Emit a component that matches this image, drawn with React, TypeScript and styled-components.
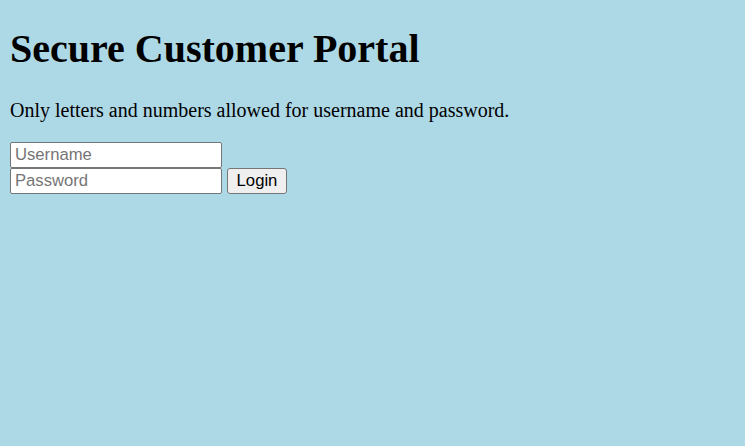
import React from "react";
import styled, { createGlobalStyle } from "styled-components";

const Global = createGlobalStyle`
  html, body {
    background: #add8e6;
  }
  body {
    margin: 0;
    padding: 10px 10px 0;
    font-family: "Liberation Serif", "Times New Roman", serif;
    color: #000;
  }
`;

const Title = styled.h1`
  font-size: 40px;
  font-weight: bold;
  margin: 15px 0 27px;
`;

const Note = styled.p`
  font-size: 20px;
  margin: 20px 0;
`;

const Form = styled.form`
  display: grid;
  grid-template-columns: 212px auto;
  grid-template-rows: 26px 26px;
  column-gap: 5px;
  justify-content: start;
  margin: 0;
`;

const Field = styled.input<{ $row: number }>`
  grid-column: 1;
  grid-row: ${(p) => p.$row};
  box-sizing: border-box;
  width: 212px;
  height: 26px;
  margin: 0;
  padding: 1px 4px;
  border: 1px solid #767676;
  border-radius: 2px;
  background: #fff;
  font-family: "Liberation Sans", Arial, sans-serif;
  font-size: 16.67px;
  color: #000;
  outline: none;
  &::placeholder {
    color: #757575;
  }
`;

const Button = styled.button`
  grid-column: 2;
  grid-row: 2;
  box-sizing: border-box;
  width: 60px;
  height: 26px;
  margin: 0;
  padding: 0 8px;
  border: 1px solid #767676;
  border-radius: 3px;
  background: #efefef;
  font-family: "Liberation Sans", Arial, sans-serif;
  font-size: 16.67px;
  color: #000;
`;

export default function App() {
  return (
    <>
      <Global />
      <Title>Secure Customer Portal</Title>
      <Note>Only letters and numbers allowed for username and password.</Note>
      <Form onSubmit={(e) => e.preventDefault()}>
        <Field $row={1} type="text" placeholder="Username" />
        <Field $row={2} type="password" placeholder="Password" />
        <Button type="submit">Login</Button>
      </Form>
    </>
  );
}
